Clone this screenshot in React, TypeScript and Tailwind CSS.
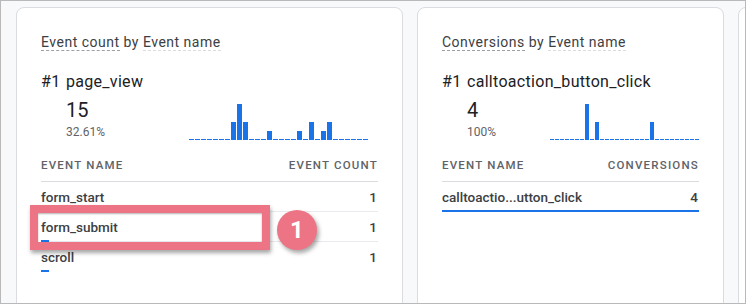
import React from 'react';

type Row = { name: string; value: number; bar?: string };

type CardProps = {
  width: string;
  metric: string;
  top: string;
  total: string;
  share: string;
  series: number[];
  unit: number;
  barClass: string;
  chartClass: string;
  column: string;
  rows: Row[];
};

const Spark: React.FC<{ series: number[]; unit: number; barClass: string; chartClass: string }> = ({
  series,
  unit,
  barClass,
  chartClass,
}) => (
  <div className={`ml-auto flex h-[36px] items-end gap-[1px] ${chartClass}`}>
    {series.map((v, i) => (
      <div key={i} className={`${barClass} bg-[#1a73e8]`} style={{ height: v ? v * unit : 1 }} />
    ))}
  </div>
);

const Card: React.FC<CardProps> = ({
  width,
  metric,
  top,
  total,
  share,
  series,
  unit,
  barClass,
  chartClass,
  column,
  rows,
}) => (
  <div className={`${width} h-[330px] shrink-0 rounded-lg border border-[#dadce0] bg-white px-6 pt-6`}>
    <div className="text-[14px] leading-5 tracking-[0.5px] text-[#3c4043]">
      <span className="border-b border-dashed border-[#9aa0a6]">{metric}</span> by{' '}
      <span className="border-b border-dashed border-[#dadce0]">Event name</span>
    </div>

    <div className="mt-[18px] flex text-[16px] leading-6 tracking-[0.3px] text-[#202124]">
      <span className="w-[25px]">#1</span>
      <span>{top}</span>
    </div>

    <div className="mt-[2px] flex items-end">
      <div className="ml-[25px]">
        <div className="text-[20px] leading-7 text-[#202124]">{total}</div>
        <div className="text-[12px] leading-4 text-[#5f6368]">{share}</div>
      </div>
      <Spark series={series} unit={unit} barClass={barClass} chartClass={chartClass} />
    </div>

    <div className="mt-[11px] flex h-[31px] items-center justify-between border-b border-[#dadce0] text-[11.5px] font-medium tracking-[1.2px] text-[#5f6368]">
      <span>EVENT NAME</span>
      <span>{column}</span>
    </div>

    {rows.map((r, i) => (
      <div key={r.name} className="relative flex h-[30px] items-center justify-between text-[13.5px] font-medium text-[#3c4043]">
        <span>{r.name}</span>
        <span className="pr-px">{r.value}</span>
        {i < rows.length - 1 && <div className="absolute bottom-0 left-0 h-px w-full bg-[#e8eaed]" />}
        {r.bar && <div className={`absolute bottom-0 left-0 h-[2px] bg-[#1a73e8] ${r.bar}`} />}
      </div>
    ))}
  </div>
);

const App: React.FC = () => {
  const first = [0, 0, 0, 0, 0, 0, 0, 2, 4, 2, 0, 0, 0, 1, 0, 0, 0, 0, 1, 0, 2, 0, 1, 2, 0, 0, 0, 0, 0, 0];
  const second = [0, 0, 0, 0, 0, 0, 0, 2, 0, 1, 0, 0, 0, 0, 0, 0, 0, 0, 0, 0, 1, 0, 0, 0, 0, 0, 0, 0, 0, 0];

  return (
    <div
      className="relative h-[304px] w-[746px] overflow-hidden border border-[#b9b9b9] bg-[#f8f9fa]"
      style={{ fontFamily: 'Roboto, "Liberation Sans", sans-serif' }}
    >
      <div className="flex gap-[14px] pl-[15px] pt-[6px]">
        <Card
          width="w-[387px]"
          metric="Event count"
          top="page_view"
          total="15"
          share="32.61%"
          series={first}
          unit={9}
          barClass="w-[5px]"
          chartClass="mr-[10px]"
          column="EVENT COUNT"
          rows={[
            { name: 'form_start', value: 1 },
            { name: 'form_submit', value: 1, bar: 'w-[8px]' },
            { name: 'scroll', value: 1, bar: 'w-[8px]' },
          ]}
        />
        <Card
          width="w-[307px]"
          metric="Conversions"
          top="calltoaction_button_click"
          total="4"
          share="100%"
          series={second}
          unit={18}
          barClass="w-[4px]"
          chartClass="mr-0"
          column="CONVERSIONS"
          rows={[{ name: 'calltoactio...utton_click', value: 4, bar: 'w-full' }]}
        />
        <div className="h-[330px] w-[100px] shrink-0 rounded-lg border border-[#dadce0] bg-white" />
      </div>

      {/* annotation overlay */}
      <div className="absolute left-[29px] top-[204px] h-[45px] w-[240px] border-[8px] border-[#ec7485] shadow-[1px_3px_4px_rgba(0,0,0,0.35),inset_0_1px_2px_rgba(0,0,0,0.3)]" />
      <div className="absolute left-[276px] top-[209px] flex h-[40px] w-[40px] items-center justify-center rounded-full bg-[#ec7485] text-[24px] font-bold text-white shadow-[2px_3px_4px_rgba(0,0,0,0.35)]">
        1
      </div>
    </div>
  );
};

export default App;
